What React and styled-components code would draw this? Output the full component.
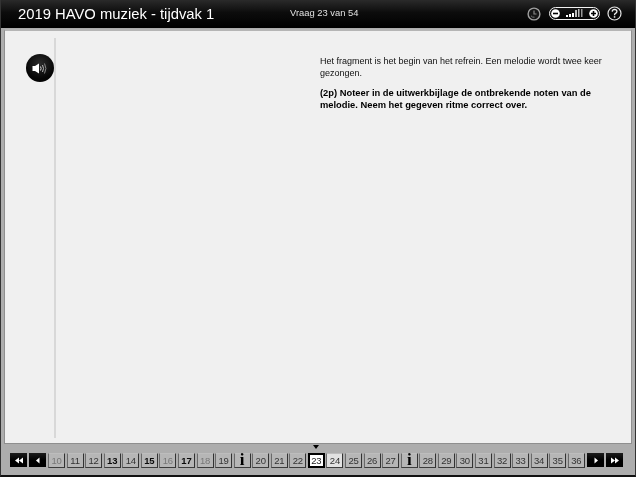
import React from 'react';
import styled, { createGlobalStyle } from 'styled-components';

const GlobalStyle = createGlobalStyle`
  html, body {
    margin: 0;
    padding: 0;
    background: #000;
  }
`;

const Page = styled.div`
  width: 636px;
  height: 477px;
  display: flex;
  flex-direction: column;
  overflow: hidden;
  box-sizing: border-box;
  font-family: 'Liberation Sans', Arial, sans-serif;
  background: #adadad;
  border-left: 1px solid #333;
  border-right: 1px solid #333;
  border-bottom: 2px solid #111;
  filter: blur(0.3px);
`;

const Header = styled.div`
  height: 28px;
  flex: none;
  display: flex;
  align-items: center;
  padding: 0 13px 1px 17px;
  box-sizing: border-box;
  background: linear-gradient(to bottom, #2a2a2a 0%, #0c0c0c 45%, #000 100%);
`;

const Title = styled.div`
  width: 272px;
  font-size: 14.8px;
  color: #fff;
  white-space: nowrap;
`;

const Counter = styled.div`
  font-size: 9.4px;
  color: #e0e0e0;
  white-space: nowrap;
  flex: 1;
  margin-bottom: 2px;
`;

const Tools = styled.div`
  display: flex;
  align-items: center;
  gap: 7px;
`;

const Volume = styled.div`
  width: 51px;
  height: 13px;
  box-sizing: border-box;
  padding: 0 1px;
  border: 1.5px solid #f2f2f2;
  border-radius: 8px;
  display: flex;
  align-items: center;
  justify-content: space-between;
`;

const Panel = styled.div`
  flex: 1;
  display: flex;
  margin: 1px 3px 0 3px;
  padding: 7px 0 5px 0;
  min-height: 0;
  background: #f0f0f0;
  border: 1px solid #8f8f8f;
  border-top: 2px solid #b5b5b5;
`;

const Side = styled.div`
  width: 51px;
  flex: none;
  box-sizing: border-box;
  padding: 16px 0 0 21px;
  border-right: 2px solid #d8d8d8;
`;

const SoundButton = styled.div`
  width: 28px;
  height: 28px;
  border-radius: 50%;
  background: radial-gradient(circle at 50% 35%, #2b2b2b 0%, #050505 65%);
  display: flex;
  align-items: center;
  justify-content: center;
`;

const Content = styled.div`
  flex: 1;
  padding: 17px 0 0 264px;
`;

const Para = styled.p`
  margin: 0 0 8px;
  width: 292px;
  line-height: 12px;
  font-size: ${(p) => (p.$bold ? 9.35 : 9)}px;
  font-weight: ${(p) => (p.$bold ? 700 : 400)};
  color: ${(p) => (p.$bold ? '#000' : '#111')};
`;

const Footer = styled.div`
  position: relative;
  height: 31px;
  flex: none;
  display: flex;
  align-items: center;
  padding: 1px 12px 0 9px;
  box-sizing: border-box;
  background: #adadad;
`;

const Marker = styled.div`
  position: absolute;
  top: 1px;
  left: 312px;
  width: 0;
  height: 0;
  border-left: 3px solid transparent;
  border-right: 3px solid transparent;
  border-top: 4px solid #000;
`;

const Arrow = styled.div`
  width: 17px;
  height: 14px;
  flex: none;
  margin-right: ${(p) => p.$gap || 0}px;
  background: linear-gradient(to bottom, #1c1c1c 0%, #000 50%);
  display: flex;
  align-items: center;
  justify-content: center;
`;

const Tiles = styled.div`
  flex: 1;
  display: flex;
  justify-content: space-between;
  margin: 0 2px;
`;

const inkColor = { light: '#777', mid: '#333', dark: '#0a0a0a' };

const Tile = styled.div`
  width: 17px;
  height: 15px;
  box-sizing: border-box;
  display: flex;
  align-items: center;
  justify-content: center;
  font-family: ${(p) => (p.$info ? "'Liberation Serif', serif" : "'Liberation Sans', Arial, sans-serif")};
  font-size: ${(p) => (p.$info ? 17 : 9.5)}px;
  font-weight: ${(p) => (p.$ink === 'dark' || p.$info ? 700 : 400)};
  letter-spacing: -0.2px;
  color: ${(p) => (p.$current ? '#222' : p.$info ? '#000' : inkColor[p.$ink])};
  background: ${(p) => (p.$current ? '#fff' : p.$next ? '#e2e2e2' : '#b6b6b6')};
  border: ${(p) => (p.$current ? '2px solid' : '1px solid')};
  border-color: ${(p) => (p.$current ? '#000' : '#bdbdbd #333 #3c3c3c #6a6a6a')};
`;

const tiles = [
  ['10', 'light'], ['11', 'mid'], ['12', 'mid'], ['13', 'dark'], ['14', 'mid'],
  ['15', 'dark'], ['16', 'light'], ['17', 'dark'], ['18', 'light'], ['19', 'mid'],
  ['i'],
  ['20', 'mid'], ['21', 'mid'], ['22', 'mid'], ['23', 'mid'], ['24', 'mid'],
  ['25', 'mid'], ['26', 'mid'], ['27', 'mid'],
  ['i'],
  ['28', 'mid'], ['29', 'mid'], ['30', 'mid'], ['31', 'mid'], ['32', 'mid'],
  ['33', 'mid'], ['34', 'mid'], ['35', 'mid'], ['36', 'mid'],
];

const Triangles = ({ count, flip }) => (
  <svg width="10" height="7" viewBox="0 0 10 7" style={flip ? { transform: 'scaleX(-1)' } : undefined}>
    {count === 2 ? (
      <path d="M1 0.5 L5 3.5 L1 6.5 Z M5 0.5 L9 3.5 L5 6.5 Z" fill="#fff" />
    ) : (
      <path d="M3.5 0.5 L7 3.5 L3.5 6.5 Z" fill="#fff" />
    )}
  </svg>
);

const SpeakerIcon = () => (
  <svg width="16" height="13" viewBox="0 0 16 13">
    <path d="M0.5 4 H3 L7 1.5 V11.5 L3 9 H0.5 Z" fill="#fff" />
    <path d="M8.5 4.5 Q9.7 6.5 8.5 8.5" stroke="#ddd" strokeWidth="1" fill="none" />
    <path d="M10.5 3 Q12.5 6.5 10.5 10" stroke="#bbb" strokeWidth="1" fill="none" />
    <path d="M12.5 1.5 Q15.3 6.5 12.5 11.5" stroke="#888" strokeWidth="1" fill="none" />
  </svg>
);

const ClockIcon = () => (
  <svg width="14" height="14" viewBox="0 0 14 14" style={{ marginRight: 1 }}>
    <circle cx="7" cy="7" r="5.9" stroke="#a0a0a0" strokeWidth="1.4" fill="#161616" />
    <path d="M7 3.5 V7 H9.5" stroke="#888" strokeWidth="1.2" fill="none" />
    <path d="M4 8.8 Q5.2 10.6 7.5 10.2" stroke="#777" strokeWidth="1" fill="none" />
  </svg>
);

const HelpIcon = () => (
  <svg width="15" height="15" viewBox="0 0 15 15">
    <circle cx="7.5" cy="7.5" r="6.5" stroke="#e4e4e4" strokeWidth="1.2" fill="none" />
    <path d="M5.2 5.6 Q5.4 3.4 7.6 3.4 Q9.9 3.5 9.9 5.4 Q9.9 6.6 8.4 7.4 Q7.5 7.9 7.5 9.2" stroke="#f0f0f0" strokeWidth="1.3" fill="none" />
    <rect x="6.8" y="10.2" width="1.5" height="1.5" fill="#f0f0f0" />
  </svg>
);

const VolumeKnob = ({ plus }) => (
  <svg width="9" height="9" viewBox="0 0 9 9">
    <circle cx="4.5" cy="4.5" r="4.3" fill="#fff" />
    <path d={plus ? 'M2 4.5 H7 M4.5 2 V7' : 'M2 4.5 H7'} stroke="#000" strokeWidth="1.6" />
  </svg>
);

const VolumeBars = () => (
  <svg width="17" height="9" viewBox="0 0 17 9">
    <rect x="0" y="6" width="2" height="2" fill="#fff" />
    <rect x="3" y="5" width="2" height="3" fill="#fff" />
    <rect x="6" y="4" width="2" height="4" fill="#fff" />
    <rect x="9" y="1" width="2" height="7" fill="#bbb" />
    <rect x="12" y="0" width="1.5" height="8" fill="#bbb" />
    <rect x="15" y="0" width="1.5" height="8" fill="#999" />
  </svg>
);

export default function App() {
  return (
    <Page>
      <GlobalStyle />
      <Header>
        <Title>2019 HAVO muziek - tijdvak 1</Title>
        <Counter>Vraag 23 van 54</Counter>
        <Tools>
          <ClockIcon />
          <Volume>
            <VolumeKnob />
            <VolumeBars />
            <VolumeKnob plus />
          </Volume>
          <HelpIcon />
        </Tools>
      </Header>
      <Panel>
        <Side>
          <SoundButton>
            <SpeakerIcon />
          </SoundButton>
        </Side>
        <Content>
          <Para>Het fragment is het begin van het refrein. Een melodie wordt twee keer gezongen.</Para>
          <Para $bold>(2p) Noteer in de uitwerkbijlage de ontbrekende noten van de melodie. Neem het gegeven ritme correct over.</Para>
        </Content>
      </Panel>
      <Footer>
        <Marker />
        <Arrow $gap={2}><Triangles count={2} flip /></Arrow>
        <Arrow><Triangles count={1} flip /></Arrow>
        <Tiles>
          {tiles.map(([label, ink], i) => (
            <Tile
              key={i}
              $ink={ink}
              $info={label === 'i'}
              $current={label === '23'}
              $next={label === '24'}
            >
              {label}
            </Tile>
          ))}
        </Tiles>
        <Arrow $gap={2}><Triangles count={1} /></Arrow>
        <Arrow><Triangles count={2} /></Arrow>
      </Footer>
    </Page>
  );
}
